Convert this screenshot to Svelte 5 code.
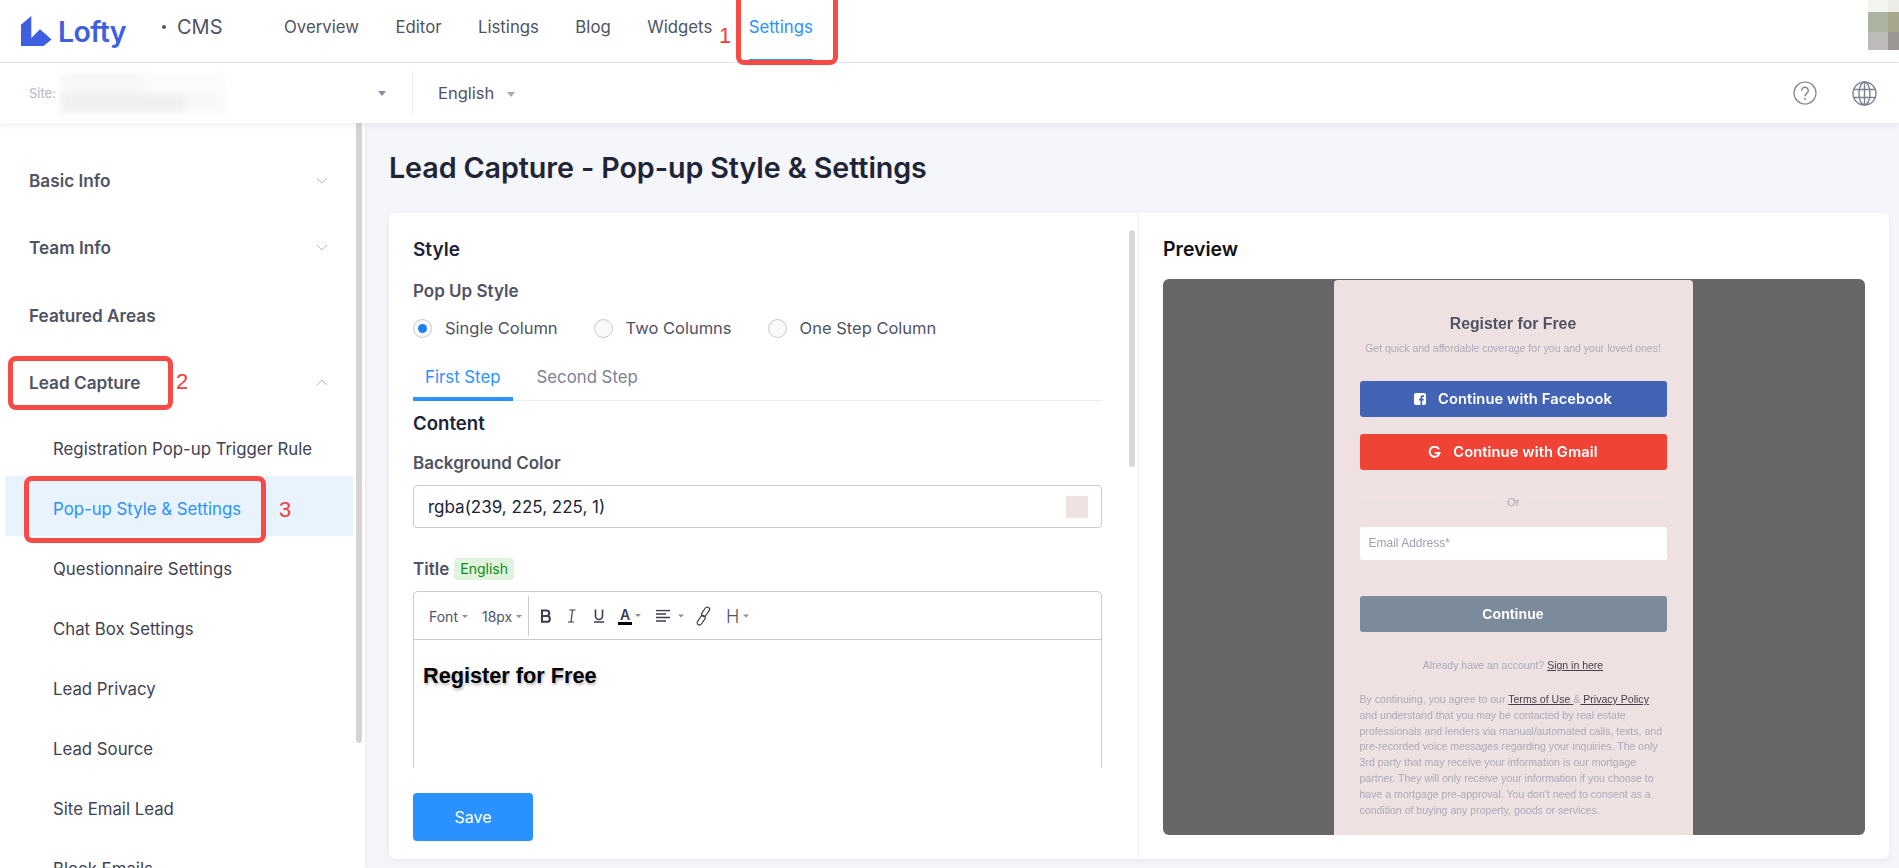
<script>
  const nav = ['Overview', 'Editor', 'Listings', 'Blog', 'Widgets'];
  const subs = ['Registration Pop-up Trigger Rule', 'Pop-up Style & Settings', 'Questionnaire Settings', 'Chat Box Settings', 'Lead Privacy', 'Lead Source', 'Site Email Lead', 'Block Emails'];
  const radios = [
    { label: 'Single Column', on: true },
    { label: 'Two Columns', on: false },
    { label: 'One Step Column', on: false }
  ];
</script>

<div class="page">
  <header class="top">
    <div class="logo">
      <svg class="mark" viewBox="0 0 31 30" width="31" height="30" aria-hidden="true">
        <path d="M0 8.700 L10.300 0 V22 L19 13.300 L30.500 23.500 L22.500 30 H0 Z" fill="#3d5fe0" />
      </svg>
      <span class="brand">Lofty</span>
    </div>
    <div class="cms"><i></i>CMS</div>
    <nav class="nav">
      {#each nav as n}<a class="nav-item">{n}</a>{/each}
      <a class="nav-item active">Settings</a>
    </nav>
    <div class="avatar"><b></b><b></b><b></b><b></b><b></b><b></b></div>
  </header>

  <div class="subbar">
    <div class="site">
      <span class="site-label">Site:</span>
      <span class="site-blur"><b></b><b></b><b></b><b></b></span>
      <span class="caret dark"></span>
    </div>
    <div class="lang">English <span class="caret"></span></div>
    <div class="sub-icons">
      <svg width="24" height="24" viewBox="0 0 24 24" fill="none" stroke="#7d8295" stroke-width="1.200">
        <circle cx="12" cy="12" r="11" />
        <path d="M8.700 9.500a3.300 3.300 0 1 1 5.200 2.700c-1.200.8-1.900 1.400-1.900 3" stroke-width="1.400" />
        <circle cx="12" cy="18" r=".9" fill="#7d8295" stroke="none" />
      </svg>
      <svg width="25" height="25" viewBox="0 0 25 25" fill="none" stroke="#7d8295" stroke-width="1.400">
        <circle cx="12.500" cy="12.500" r="11.500" />
        <ellipse cx="12.500" cy="12.500" rx="5.500" ry="11.500" />
        <path d="M12.500 1v23M1.500 8.500h22M1.500 16.500h22" />
      </svg>
    </div>
  </div>

  <div class="body">
    <aside class="side">
      <div class="side-list">
        <div class="group">Basic Info
          <svg class="chev" viewBox="0 0 12 7" width="12" height="7"><path d="M1 1l5 5 5-5" /></svg>
        </div>
        <div class="group">Team Info
          <svg class="chev" viewBox="0 0 12 7" width="12" height="7"><path d="M1 1l5 5 5-5" /></svg>
        </div>
        <div class="group">Featured Areas</div>
        <div class="group">Lead Capture
          <svg class="chev" viewBox="0 0 12 7" width="12" height="7"><path d="M1 6l5-5 5 5" /></svg>
        </div>
        {#each subs as s, i}
          <div class="sub" class:current={i === 1}>{s}</div>
        {/each}
      </div>
      <div class="side-scroll"></div>
    </aside>

    <main class="main">
      <h1>Lead Capture - Pop-up Style &amp; Settings</h1>
      <section class="card">
        <div class="form-pane">
          <div class="form-scroll">
            <h2 class="style-h">Style</h2>
            <div class="label popup-label">Pop Up Style</div>
            <div class="radios">
              {#each radios as r}
                <span class="radio-item"><span class="radio" class:on={r.on}></span>{r.label}</span>
              {/each}
            </div>
            <div class="tabs">
              <span class="tab active">First Step</span>
              <span class="tab">Second Step</span>
            </div>
            <h2 class="content-h">Content</h2>
            <div class="label bg-label">Background Color</div>
            <div class="color-input">rgba(239, 225, 225, 1)<span class="swatch"></span></div>
            <div class="title-row"><span class="label">Title</span><span class="tag">English</span></div>
            <div class="editor">
              <div class="toolbar">
                <span class="tool-group">
                  <span class="t-sel font">Font<span class="mini"></span></span>
                  <span class="t-sel">18px<span class="mini"></span></span>
                </span>
                <span class="tools">
                  <svg class="ic ic-b" width="14" height="14" viewBox="0 0 14 14" fill="none" stroke="#3a3f50" stroke-width="2"><path d="M3 1.500h4.500a2.700 2.700 0 0 1 0 5.500H3zM3 7h5a2.900 2.900 0 0 1 0 5.800H3z" /></svg>
                  <svg class="ic ic-i" width="12" height="14" viewBox="0 0 12 14" fill="none" stroke="#3a3f50" stroke-width="1.200"><path d="M3.500 1h6M2 13h6M6.500 1l-1.500 12" /></svg>
                  <svg class="ic ic-u" width="12" height="15" viewBox="0 0 12 15" fill="none" stroke="#3a3f50" stroke-width="1.600"><path d="M2.500 1v6.500a3.500 3.500 0 0 0 7 0V1M1 13.500h10" /></svg>
                  <span class="ic-a"><span>A</span><span class="mini"></span></span>
                  <span class="ic-align">
                    <svg width="15" height="13" viewBox="0 0 15 13" fill="none" stroke="#3a3f50" stroke-width="1.500"><path d="M0 1h14M0 4.500h10M0 8h14M0 11.500h10" /></svg>
                    <span class="mini"></span>
                  </span>
                  <svg class="ic-link" width="17" height="20" viewBox="0 0 17 20" fill="none" stroke="#3a3f50" stroke-width="1.200"><rect x="8.300" y="0.500" width="4.600" height="10.500" rx="2.300" transform="rotate(35 10.600 5.700)" /><rect x="3.900" y="9" width="4.600" height="10.500" rx="2.300" transform="rotate(35 6.200 14.200)" /></svg>
                  <span class="ic-h">H<span class="mini"></span></span>
                </span>
              </div>
              <div class="editor-body">Register for Free</div>
            </div>
          </div>
          <div class="form-foot"><button class="save">Save</button></div>
          <div class="form-scrollbar"></div>
        </div>

        <div class="preview-pane">
          <h2 class="preview-h">Preview</h2>
          <div class="stage">
            <div class="modal">
              <div class="m-title">Register for Free</div>
              <div class="m-sub">Get quick and affordable coverage for you and your loved ones!</div>
              <div class="m-btn fb">
                <svg width="12" height="12" viewBox="0 0 12 12"><rect width="12" height="12" rx="2" fill="#fff" /><path d="M8.200 12V7.400h1.500l.2-1.700H8.200v-1c0-.5.200-.8.800-.8h1V2.400C9.700 2.300 9.300 2.300 8.800 2.300c-1.400 0-2.300.8-2.300 2.300v1.100H5v1.700h1.500V12z" fill="#4364b4" /></svg>
                <span>Continue with Facebook</span>
              </div>
              <div class="m-btn gm">
                <svg width="13" height="13" viewBox="0 0 13 13" fill="none" stroke="#fff" stroke-width="2"><path d="M11 3.200A5 5 0 1 0 11.500 7H6.800" /></svg>
                <span>Continue with Gmail</span>
              </div>
              <div class="m-or"><span>Or</span></div>
              <div class="m-input">Email Address*</div>
              <div class="m-btn cont">Continue</div>
              <div class="m-already">Already have an account? <u>Sign in here</u></div>
              <div class="m-legal">By continuing, you agree to our <u>Terms of Use&nbsp;</u>&amp;<u>&nbsp;Privacy Policy</u><br />and understand that you may be contacted by real estate<br />professionals and lenders via manual/automated calls, texts, and<br />pre-recorded voice messages regarding your inquiries. The only<br />3rd party that may receive your information is our mortgage<br />partner. They will only receive your information if you choose to<br />have a mortgage pre-approval. You don't need to consent as a<br />condition of buying any property, goods or services.</div>
            </div>
          </div>
        </div>
      </section>
    </main>
  </div>

  <div class="mark-box b1"></div>
  <div class="mark-box b2"></div>
  <div class="mark-box b3"></div>
  <span class="num n1">1</span>
  <span class="num n2">2</span>
  <span class="num n3">3</span>
</div>

<style>
  :global(body) { margin: 0; background: #f5f6fa; }
  .page {
    position: relative; width: 1899px; height: 868px; overflow: hidden;
    font-family: Inter, "Noto Sans", sans-serif; color: #505363; background: #f5f6fa;
  }
  .top {
    height: 62px; background: #fff; border-bottom: 1px solid #e6e6ee;
    display: flex; align-items: stretch; position: relative;
  }
  .logo { display: flex; align-items: center; margin-left: 21px; width: 142px; gap: 6px; }
  .mark { display: block; }
  .brand { font-size: 28.500px; font-weight: 600; color: #3d5fe0; letter-spacing: -0.6px; line-height: 30px; margin-top: 2px; }
  .cms { display: flex; align-items: center; font-size: 20px; color: #505363; width: 121px; padding-bottom: 8px; box-sizing: border-box; }
  .cms i { width: 4px; height: 4px; background: #505363; border-radius: 50%; margin-right: 11px; margin-left: -1px; }
  .nav { display: flex; gap: 36.400px; }
  .nav-item { font-size: 16.800px; line-height: 54px; color: #505363; height: 59px; box-sizing: border-box; }
  .nav-item.active { color: #2a92ff; border-bottom: 2px solid #2a92ff; height: 61px; }
  .avatar {
    position: absolute; right: 0; top: 0; width: 31px; height: 50px;
    display: grid; grid-template-columns: 20px 11px; grid-template-rows: 12px 20px 18px;
  }
  .avatar b:nth-child(1) { background: #f3f3f0; }
  .avatar b:nth-child(2) { background: #ecece6; }
  .avatar b:nth-child(3) { background: #abb4a0; }
  .avatar b:nth-child(4) { background: #a8a78e; }
  .avatar b:nth-child(5) { background: #bdbaba; }
  .avatar b:nth-child(6) { background: #9d9794; }

  .subbar {
    height: 60px; background: #fff; display: flex; align-items: center; position: relative; z-index: 2;
    box-shadow: 0 2px 6px rgba(30, 40, 70, .08);
  }
  .site { width: 413px; height: 44px; box-sizing: border-box; border-right: 1px solid #ebebf0; display: flex; align-items: center; padding-left: 29px; position: relative; }
  .site-label { font-size: 13px; color: #b4b6c0; }
  .site-blur { width: 165px; height: 40px; margin-left: 4px; display: grid; grid-template-columns: 40px 45px 40px 40px; grid-template-rows: 20px 20px; filter: blur(3px); opacity: .9; }
  .site-blur b:nth-child(1) { grid-column: 1 / 3; background: #f7f7f8; }
  .site-blur b:nth-child(2) { grid-column: 3 / 5; background: #fbfbfb; }
  .site-blur b:nth-child(3) { grid-column: 1 / 4; background: #efeff1; }
  .site-blur b:nth-child(4) { background: #f8f8f9; }
  .caret { display: inline-block; width: 0; height: 0; border: 4px solid transparent; border-top: 5px solid #a6a8b4; border-bottom: 0; vertical-align: middle; margin-left: 8px; }
  .caret.dark { position: absolute; left: 378px; top: 20px; border-top-color: #8b8e9c; margin: 0; }
  .lang { font-size: 16.500px; color: #505363; margin-left: 25px; }
  .sub-icons { margin-left: auto; display: flex; gap: 35px; align-items: center; padding-right: 22px; }

  .body { display: flex; height: 746px; }
  .side { width: 365px; background: #fff; position: relative; flex: none; overflow: hidden; box-shadow: 1px 0 3px rgba(30, 40, 70, .05); }
  .side-list { padding-top: 23px; width: 348px; margin-left: 5px; }
  .group {
    height: 67.500px; display: flex; align-items: center; justify-content: space-between;
    font-size: 17.200px; font-weight: 600; color: #505363; padding: 1px 25px 0 24px; box-sizing: border-box;
  }
  .chev { fill: none; stroke: #b5b7c3; stroke-width: 1; }
  .sub { height: 60px; line-height: 60px; font-size: 16.800px; color: #3f4252; padding: 3px 0 0 48px; box-sizing: border-box; }
  .sub.current { background: #e8f3fe; color: #2a92ff; }
  .side-scroll { position: absolute; left: 356px; top: 0; width: 6px; height: 620px; background: #d4d4d4; border-radius: 0 0 3px 3px; }

  .main { flex: 1; padding-left: 24px; padding-right: 10px; min-width: 0; }
  h1 { margin: 0; font-size: 28.700px; font-weight: 600; color: #202437; line-height: 36px; padding-top: 27px; height: 63px; letter-spacing: -0.1px; }
  .card { background: #fff; border-radius: 6px; height: 646px; display: flex; box-shadow: 0 2px 6px rgba(30, 40, 70, .06); }
  .form-pane { width: 749px; border-right: 1px solid #eeeef3; position: relative; flex: none; display: flex; flex-direction: column; }
  .form-scroll { height: 555px; overflow: hidden; padding: 0 36px 0 24px; }
  h2 { margin: 0; font-size: 18.600px; font-weight: 600; color: #202437; line-height: 24px; }
  .style-h { padding-top: 25px; font-size: 19px; }
  .label { font-size: 17px; font-weight: 600; color: #505363; line-height: 22px; }
  .popup-label { margin-top: 18px; }
  .radios { display: flex; margin-top: 14px; height: 24px; align-items: center; }
  .radio-item { display: flex; align-items: center; font-size: 16.500px; color: #505363; gap: 13px; margin-right: 36px; }
  .radio { width: 19px; height: 19px; border-radius: 50%; border: 1px solid #c6c8d2; box-sizing: border-box; background: #fafafb; position: relative; }
  .radio.on::after { content: ""; position: absolute; left: 4px; top: 4px; width: 9px; height: 9px; border-radius: 50%; background: #1e80f0; }
  .tabs { display: flex; margin-top: 16px; border-bottom: 1px solid #ebebf0; height: 45px; box-sizing: border-box; }
  .tab { font-size: 16.800px; color: #7d8295; line-height: 42px; padding: 0 12px; height: 44px; box-sizing: border-box; margin-right: 12px; }
  .tab.active { color: #2a92ff; border-bottom: 4px solid #2a92ff; height: 45px; }
  .content-h { margin-top: 10px; }
  .bg-label { margin-top: 17px; }
  .color-input {
    margin-top: 11px; height: 43px; box-sizing: border-box; border: 1px solid #c9cad4; border-radius: 4px;
    display: flex; align-items: center; justify-content: space-between; padding: 0 13px 0 14px; font-size: 17px; color: #202437;
  }
  .swatch { width: 22px; height: 22px; background: #efe1e1; }
  .title-row { display: flex; align-items: center; gap: 5px; margin-top: 30px; height: 22px; }
  .tag { font-size: 14px; color: #0e8a14; background: #dff3dd; border-radius: 4px; padding: 0 6px; line-height: 22px; height: 22px; }
  .editor { margin-top: 11px; border: 1px solid #c9cad4; border-bottom: 0; border-radius: 5px 5px 0 0; height: 200px; }
  .toolbar { height: 48px; border-bottom: 1px solid #c9cad4; display: flex; align-items: center; box-sizing: border-box; }
  .tool-group { display: flex; align-items: center; height: 40px; width: 115px; box-sizing: border-box; border-right: 1px solid #c9cad4; padding-left: 15px; gap: 14px; font-size: 14px; color: #505363; }
  .t-sel { display: inline-flex; align-items: center; gap: 4px; padding-top: 2px; }
  .mini { display: inline-block; width: 0; height: 0; border: 3px solid transparent; border-top: 3px solid #8a8d9a; border-bottom: 0; }
  .tools { display: flex; align-items: center; position: relative; flex: 1; height: 40px; }
  .tools > * { position: absolute; top: 50%; transform: translateY(-50%); }
  .ic-b { left: 10px; }
  .ic-i { left: 37px; }
  .ic-u { left: 64px; }
  .ic-a { left: 89px; display: flex; align-items: center; gap: 3px; font-size: 14px; font-weight: 600; color: #3a3f50; }
  .ic-a span:first-child { border-bottom: 3px solid #000; padding: 0 2px; line-height: 15px; }
  .ic-align { left: 127px; display: flex; align-items: center; gap: 7px; }
  .ic-link { left: 166px; }
  .ic-h { left: 197px; font-size: 18px; color: #505363; display: flex; align-items: center; gap: 4px; font-weight: 300; }
  .editor-body { padding: 24px 0 0 9px; font-family: "Liberation Sans", Arial, sans-serif; font-weight: 700; font-size: 21.700px; color: #000; line-height: 24px; text-shadow: 1px 2px 3px rgba(0, 0, 0, .3); }
  .form-foot { padding: 25px 0 0 24px; }
  .save { width: 120px; height: 48px; border: 0; border-radius: 4px; background: #2a92ff; color: #fff; font: 400 16px Inter, sans-serif; display: block; padding: 0; }
  .form-scrollbar { position: absolute; left: 740px; top: 17px; width: 6px; height: 237px; background: #d8d8d8; border-radius: 3px; }

  .preview-pane { flex: 1; padding: 24px 24px 0 24px; min-width: 0; }
  .preview-h { color: #111; font-size: 19.500px; }
  .stage { margin-top: 18px; height: 556px; background: #666; border-radius: 6px; overflow: hidden; display: flex; justify-content: center; }
  .modal { width: 359px; margin: 1px 2px 0 0; background: #efe1e1; border-radius: 4px 4px 0 0; padding: 0 26px; box-sizing: border-box; text-align: center; font-family: "Liberation Sans", Arial, sans-serif; }
  .m-title { font-size: 15.800px; font-weight: 700; color: #505363; padding-top: 34px; line-height: 20px; filter: blur(.3px); }
  .m-sub { font-size: 10.500px; color: #a9abb9; margin-top: 7px; line-height: 14px; white-space: nowrap; filter: blur(.3px); }
  .m-btn { height: 36px; border-radius: 3px; color: #fff; font-family: Inter, sans-serif; font-weight: 600; font-size: 14.700px; display: flex; align-items: center; justify-content: center; filter: blur(.3px); letter-spacing: .1px; }
  .fb { background: #4364b4; margin-top: 26px; gap: 12px; }
  .gm { background: #ef4335; margin-top: 17px; gap: 12px; }
  .m-or { margin-top: 24px; height: 16px; display: flex; align-items: center; justify-content: center; font-size: 11px; color: #a9abb9; background: linear-gradient(#e6dfe3, #e6dfe3) center/100% 1px no-repeat; }
  .m-or span { background: #efe1e1; padding: 0 8px; }
  .m-input { margin-top: 17px; height: 33px; background: #fff; border-radius: 3px; font-size: 12px; color: #9da0b0; text-align: left; line-height: 33px; padding-left: 9px; filter: blur(.3px); }
  .cont { background: #7c8b9b; margin-top: 36px; font-family: "Liberation Sans", Arial, sans-serif; font-weight: 700; font-size: 14px; }
  .m-already { margin-top: 26px; font-size: 10.500px; color: #a9abb9; line-height: 14px; filter: blur(.3px); }
  .m-already u, .m-legal u { color: #4a3d45; }
  .m-legal { margin-top: 20px; font-size: 10.550px; color: #a9abb9; line-height: 15.800px; text-align: left; white-space: nowrap; filter: blur(.3px); }

  .mark-box { position: absolute; border: 5px solid #f54b47; border-radius: 8px; box-sizing: border-box; z-index: 5; }
  .b1 { left: 736px; top: -12px; width: 102px; height: 77px; }
  .b2 { left: 8px; top: 356px; width: 165px; height: 54px; }
  .b3 { left: 24px; top: 476px; width: 242px; height: 67px; }
  .num { position: absolute; z-index: 5; color: #f0403c; font-size: 22px; line-height: 24px; font-family: "Liberation Sans", Arial, sans-serif; }
  .n1 { left: 719px; top: 24px; }
  .n2 { left: 176px; top: 370px; }
  .n3 { left: 279px; top: 498px; }
</style>
